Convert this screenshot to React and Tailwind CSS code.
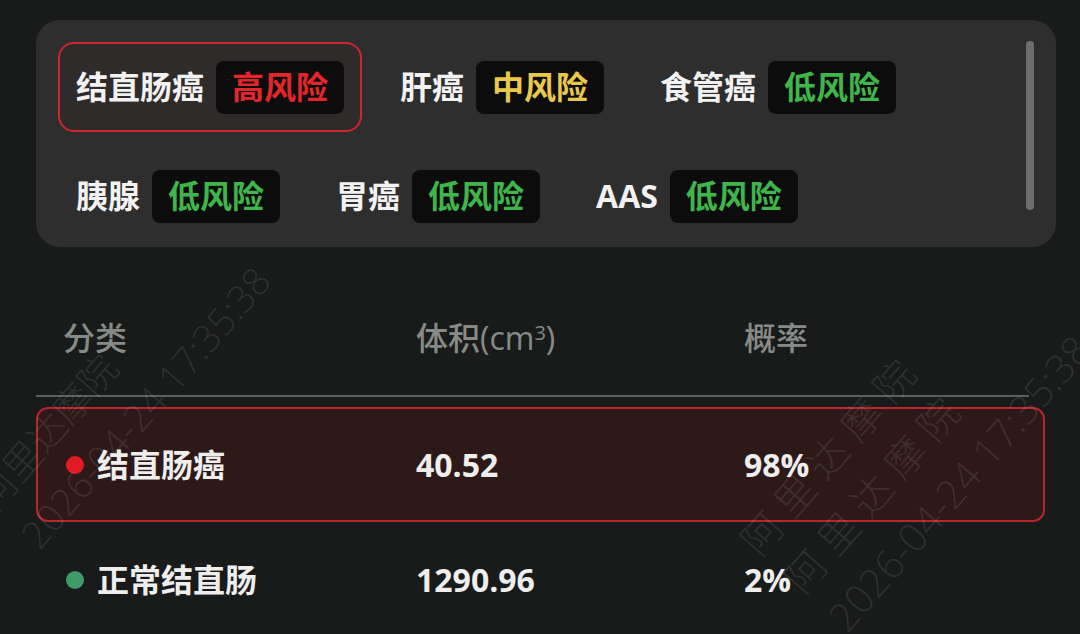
const risks = [
  { name: '结直肠癌', level: '高风险', tone: 'high', active: true },
  { name: '肝癌', level: '中风险', tone: 'mid' },
  { name: '食管癌', level: '低风险', tone: 'low' },
  { name: '胰腺', level: '低风险', tone: 'low' },
  { name: '胃癌', level: '低风险', tone: 'low' },
  { name: 'AAS', level: '低风险', tone: 'low' },
]

const toneText = {
  high: 'text-[#e2262c]',
  mid: 'text-[#e9c94b]',
  low: 'text-[#3fb54c]',
}

const rows = [
  { name: '结直肠癌', volume: '40.52', prob: '98%', dot: 'bg-[#e01b22]', active: true },
  { name: '正常结直肠', volume: '1290.96', prob: '2%', dot: 'bg-[#3e9b66]' },
]

function RiskItem({ item }) {
  return (
    <div
      className={`flex h-[90px] items-center gap-3 rounded-[16px] border-2 px-4 ${
        item.active ? 'border-[#cc272d] bg-[#302b2b]' : 'border-transparent'
      }`}
    >
      <span className="text-[32px] font-bold leading-none text-[#f2f2f2]">{item.name}</span>
      <span
        className={`flex h-[53px] items-center rounded-lg bg-[#0c0c0c] px-4 text-[32px] font-bold leading-none ${toneText[item.tone]}`}
      >
        {item.level}
      </span>
    </div>
  )
}

// faint diagonal watermark laid over the page
function Watermark({ className, lines }) {
  return (
    <div
      className={`pointer-events-none absolute flex -rotate-[49deg] flex-col items-start font-light leading-[58px] text-[#ffffff1a] ${className}`}
    >
      {lines.map((line, i) => (
        <span key={i} className="whitespace-nowrap">
          {line}
        </span>
      ))}
    </div>
  )
}

export default function App() {
  return (
    <div className="relative h-[634px] w-[1080px] overflow-hidden bg-[#181b19] font-['Open_Sans','Noto_Sans_CJK_SC',sans-serif]">
      <div className="pl-9 pr-6 pt-5">
        <div className="flex h-[227px] rounded-[24px] bg-[#2e2e2e] pl-[22px] pr-[22px] pt-[22px]">
          <div className="flex flex-1 flex-wrap content-start gap-x-5 gap-y-[19px]">
            {risks.map((item) => (
              <RiskItem key={item.name} item={item} />
            ))}
          </div>
          <div className="mt-[-1px] h-[169px] w-2 rounded-full bg-[#6e6e6e]" />
        </div>

        <div className="mt-[71px] grid grid-cols-[353px_328px_1fr] pl-[27px] text-[32px] font-medium leading-[40px] text-[#878b88]">
          <span>分类</span>
          <span>
            体积(cm<sup className="text-[20px]">3</sup>)
          </span>
          <span>概率</span>
        </div>

        <div className="mt-[37px] h-[2px] w-[993px] bg-[#5a5f5c]" />

        <div className="mt-[10px] w-[1009px]">
          {rows.map((row) => (
            <div
              key={row.name}
              className={`grid h-[115px] grid-cols-[350px_328px_1fr] items-center rounded-[12px] border-2 pl-7 text-[32px] font-bold leading-none text-[#eeeeee] ${
                row.active ? 'border-[#b7262c] bg-[#2d1a18]' : 'border-transparent'
              }`}
            >
              <div className="flex items-center gap-[13px]">
                <span className={`h-[18px] w-[18px] rounded-full ${row.dot}`} />
                <span>{row.name}</span>
              </div>
              <span>{row.volume}</span>
              <span>{row.prob}</span>
            </div>
          ))}
        </div>
      </div>

      <Watermark
        className="left-[-55px] top-[330px] text-[38px]"
        lines={['阿里达摩院', '2026-04-24 17:35:38']}
      />
      <Watermark
        className="left-[728px] top-[358px] text-[40px]"
        lines={['阿 里 达 摩 院', '阿 里 达 摩 院', '2026-04-24 17:35:38']}
      />
    </div>
  )
}
